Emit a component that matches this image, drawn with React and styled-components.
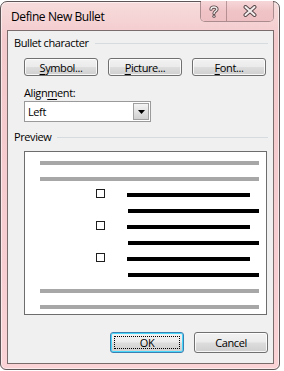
import React from "react";
import styled, { createGlobalStyle } from "styled-components";

const Global = createGlobalStyle`
  html, body {
    margin: 0;
    padding: 0;
    background: #ffffff;
  }
  body {
    font-family: "Open Sans", "Noto Sans", sans-serif;
    font-size: 11px;
    letter-spacing: -0.4px;
    color: #000;
  }
`;

const Window = styled.div`
  position: relative;
  box-sizing: border-box;
  width: 280px;
  height: 369px;
  margin: 1px 0 0 0;
  border: 1px solid #5e5557;
  border-radius: 7px 7px 6px 6px;
  background: linear-gradient(180deg, #f7dcdc 0%, #f3c9cc 10%, #f6cdd0 60%, #f9d3d6 100%);
  box-shadow: inset 0 0 0 1px rgba(255, 255, 255, 0.55);
  display: flex;
  flex-direction: column;
`;

const TitleBar = styled.div`
  height: 28px;
  display: flex;
  align-items: flex-start;
  padding-left: 10px;
`;

const Title = styled.div`
  margin-top: 6px;
  font-size: 12px;
  color: #000;
`;

const Caption = styled.div`
  margin-left: auto;
  margin-right: 5px;
  margin-top: -1px;
  display: flex;
  height: 20px;
  border: 1px solid rgba(110, 80, 85, 0.55);
  border-top: none;
  border-radius: 0 0 5px 5px;
  overflow: hidden;
  box-shadow: inset 0 0 0 1px rgba(255, 255, 255, 0.5);
`;

const CapButton = styled.div`
  width: ${(p) => p.$w}px;
  display: flex;
  align-items: center;
  justify-content: center;
  background: linear-gradient(180deg, #f6d6d8 0%, #f0c4c7 50%, #eec0c3 100%);
  & + & {
    border-left: 1px solid rgba(110, 80, 85, 0.45);
  }
`;

const Client = styled.div`
  flex: 1;
  box-sizing: border-box;
  margin: 0 5px 5px 6px;
  border: 1px solid #7a6b6d;
  background: #f0f0f0;
  padding: 5px 5px 9px 6px;
  display: flex;
  flex-direction: column;
`;

const GroupHeader = styled.div`
  display: flex;
  align-items: center;
  height: 14px;
  line-height: 14px;
  &::after {
    content: "";
    flex: 1;
    height: 1px;
    margin-left: 6px;
    background: #d6dbe0;
  }
`;

const GroupBody = styled.div`
  padding-left: 10px;
  display: flex;
  flex-direction: column;
`;

const ButtonRow = styled.div`
  display: flex;
  gap: 10px;
  margin-top: ${(p) => p.$mt || 0}px;
  justify-content: ${(p) => (p.$end ? "flex-end" : "flex-start")};
`;

const Button = styled.div`
  box-sizing: border-box;
  width: 74px;
  height: ${(p) => p.$h || 19}px;
  border: 1px solid ${(p) => (p.$default ? "#3c7fb1" : "#707070")};
  border-radius: 3px;
  background: linear-gradient(180deg, #f2f2f2 0%, #ebebeb 48%, #dddddd 52%, #cfcfcf 100%);
  box-shadow: inset 0 0 0 1px ${(p) => (p.$default ? "#48d8fb" : "rgba(255,255,255,0.8)")};
  display: flex;
  align-items: center;
  justify-content: center;
  position: relative;
  font-size: 11px;
  ${(p) =>
    p.$default &&
    `
    &::after {
      content: "";
      position: absolute;
      inset: 3px;
      border: 1px dotted #000;
    }
  `}
`;

const Key = styled.span`
  text-decoration: underline;
  text-underline-offset: 2px;
`;

const FieldLabel = styled.div`
  margin-top: 10px;
  height: 14px;
  line-height: 14px;
`;

const Select = styled.div`
  box-sizing: border-box;
  margin-top: 1px;
  width: 127px;
  height: 21px;
  border: 1px solid #9a9a9a;
  background: #fff;
  display: flex;
  align-items: stretch;
`;

const SelectText = styled.div`
  flex: 1;
  padding-left: 3px;
  display: flex;
  align-items: center;
`;

const DropButton = styled.div`
  width: 14px;
  margin: 1px;
  border: 1px solid #a0a0a0;
  background: linear-gradient(180deg, #f4f4f4 0%, #e2e2e2 50%, #d0d0d0 100%);
  display: flex;
  align-items: center;
  justify-content: center;
`;

const PreviewHeader = styled(GroupHeader)`
  margin-top: 8px;
`;

const PreviewBox = styled.div`
  box-sizing: border-box;
  margin-top: 7px;
  width: 243px;
  height: 164px;
  border: 1px solid #6d6d6d;
  background: #fff;
  padding-top: 3px;
  display: flex;
  flex-direction: column;
  overflow: hidden;
`;

const Row = styled.div`
  height: 16px;
  flex: none;
  display: flex;
  align-items: center;
`;

const Bar = styled.div`
  height: 4px;
  background: ${(p) => (p.$gray ? "#a7a7a7" : "#000")};
  margin-left: ${(p) => p.$ml}px;
  width: ${(p) => p.$w}px;
`;

const Check = styled.div`
  box-sizing: border-box;
  width: 9px;
  height: 9px;
  margin-left: 71px;
  margin-top: -3px;
  border: 1px solid #1e1e1e;
  background: #fff;
`;

const rows = [
  "gray",
  "gray",
  "bullet",
  "long",
  "bullet",
  "long",
  "bullet",
  "long",
  "gray",
  "gray",
];

const PreviewRow = ({ kind }) => {
  if (kind === "gray")
    return (
      <Row>
        <Bar $gray $ml={15} $w={219} />
      </Row>
    );
  if (kind === "long")
    return (
      <Row>
        <Bar $ml={103} $w={131} />
      </Row>
    );
  return (
    <Row>
      <Check />
      <Bar $ml={22} $w={123} />
    </Row>
  );
};

const App = () => {
  return (
    <>
      <Global />
      <Window>
        <TitleBar>
          <Title>Define New Bullet</Title>
          <Caption>
            <CapButton $w={25}>
              <svg width="10" height="13" viewBox="0 0 10 13">
                <path
                  d="M2 4.2 C2 1.5 8 1.2 8 4.2 C8 6.2 5 6.4 5 8.4"
                  fill="none"
                  stroke="#5a4a4c"
                  strokeWidth="3.2"
                  strokeLinecap="round"
                />
                <path
                  d="M2 4.2 C2 1.5 8 1.2 8 4.2 C8 6.2 5 6.4 5 8.4"
                  fill="none"
                  stroke="#f4eeee"
                  strokeWidth="1.4"
                  strokeLinecap="round"
                />
                <circle cx="5" cy="11.2" r="1.6" fill="#5a4a4c" />
                <circle cx="5" cy="11.2" r="0.8" fill="#f4eeee" />
              </svg>
            </CapButton>
            <CapButton $w={46}>
              <svg width="14" height="12" viewBox="0 0 14 12">
                <path
                  d="M2.5 2 L11.5 10 M11.5 2 L2.5 10"
                  stroke="#5a4a4c"
                  strokeWidth="4"
                  strokeLinecap="round"
                />
                <path
                  d="M2.5 2 L11.5 10 M11.5 2 L2.5 10"
                  stroke="#f4eeee"
                  strokeWidth="2"
                  strokeLinecap="round"
                />
              </svg>
            </CapButton>
          </Caption>
        </TitleBar>
        <Client>
          <GroupHeader>Bullet character</GroupHeader>
          <GroupBody>
            <ButtonRow $mt={8}>
              <Button $h={18}>
                <span>
                  <Key>S</Key>ymbol...
                </span>
              </Button>
              <Button $h={18}>
                <span>
                  <Key>P</Key>icture...
                </span>
              </Button>
              <Button $h={18}>
                <span>
                  <Key>F</Key>ont...
                </span>
              </Button>
            </ButtonRow>
            <FieldLabel>
              Align<Key>m</Key>ent:
            </FieldLabel>
            <Select>
              <SelectText>Left</SelectText>
              <DropButton>
                <svg width="7" height="4" viewBox="0 0 7 4">
                  <path d="M0 0 H7 L3.5 4 Z" fill="#000" />
                </svg>
              </DropButton>
            </Select>
          </GroupBody>
          <PreviewHeader>Preview</PreviewHeader>
          <GroupBody>
            <PreviewBox>
              {rows.map((k, i) => (
                <PreviewRow key={i} kind={k} />
              ))}
            </PreviewBox>
          </GroupBody>
          <ButtonRow $mt={17} $end>
            <Button $default $h={21}>
              OK
            </Button>
            <Button $h={21}>Cancel</Button>
          </ButtonRow>
        </Client>
      </Window>
    </>
  );
};

export default App;
